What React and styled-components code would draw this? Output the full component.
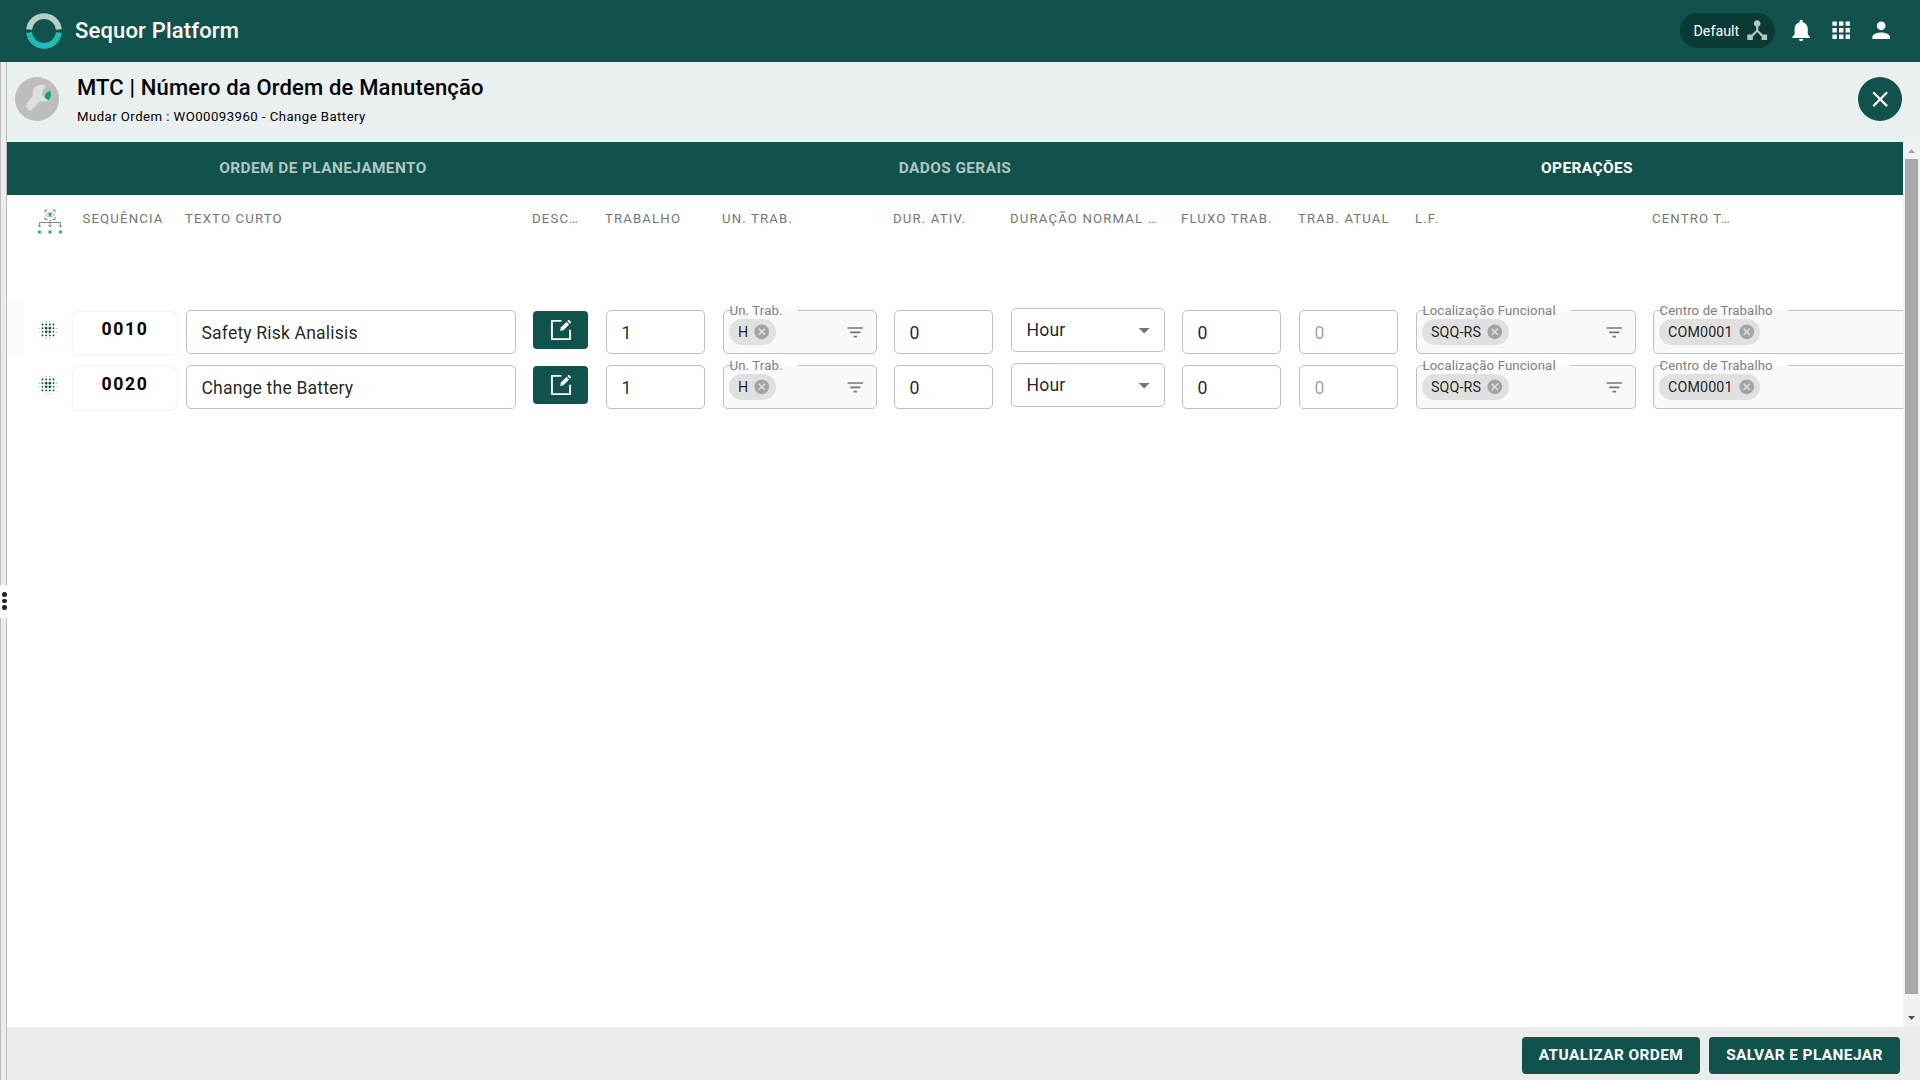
import React, { useState } from 'react';
import styled, { createGlobalStyle } from 'styled-components';
import {
  MdApps,
  MdArrowDropDown,
  MdBlurOn,
  MdCancel,
  MdClose,
  MdDeviceHub,
  MdFilterList,
  MdNotifications,
  MdPerson,
} from 'react-icons/md';

const GlobalStyle = createGlobalStyle`
  * {
    box-sizing: border-box;
  }

  body {
    margin: 0;
    font-family: Roboto, "Liberation Sans", sans-serif;
    color: rgba(0, 0, 0, 0.87);
    overflow: hidden;
  }

  svg {
    display: block;
    flex-shrink: 0;
  }

  button {
    border: 0;
    padding: 0;
    font-family: inherit;
    cursor: pointer;
  }
`;

const Page = styled.div`
  width: 1920px;
  height: 1080px;
  display: flex;
  flex-direction: column;
  background: #fff;
`;

const TopBar = styled.header`
  height: 62px;
  flex-shrink: 0;
  padding: 0 26px;
  display: flex;
  align-items: center;
  background: #11534c;
  border-bottom: 1px solid #1c4a48;
`;

const Brand = styled.h1`
  margin: 0 auto 0 13px;
  color: #fff;
  font-size: 22px;
  font-weight: 500;
  line-height: 26px;
  letter-spacing: 0.17px;
`;

const SitePill = styled.div`
  width: 95px;
  height: 35px;
  margin-right: 13px;
  padding: 0 5px 0 13px;
  display: flex;
  align-items: center;
  justify-content: space-between;
  border-radius: 18px;
  background: #0c3a35;
  color: #fff;
  font-size: 14.3px;

  svg {
    color: #b6c4c2;
  }
`;

const TopActions = styled.div`
  display: flex;
  gap: 13.2px;
  color: #fff;
`;

const Workspace = styled.div`
  flex: 1;
  min-height: 0;
  display: flex;
`;

const Splitter = styled.div`
  width: 7px;
  flex-shrink: 0;
  display: flex;
  flex-direction: column;
  justify-content: center;
  border: solid #bdbdbd;
  border-width: 0 1px;
  background: #ececec;
  padding-top: 60px;
`;

const SplitterHandle = styled.div`
  height: 33px;
  margin: 0 -1px;
  padding-left: 2px;
  display: flex;
  flex-direction: column;
  justify-content: center;
  gap: 2px;
  background: #fff;

  span {
    width: 4.6px;
    height: 4.6px;
    border-radius: 50%;
    background: #222;
  }
`;

const Main = styled.main`
  flex: 1;
  min-width: 0;
  display: flex;
  flex-direction: column;
`;

const PageHeader = styled.div`
  height: 80px;
  flex-shrink: 0;
  padding: 15px 18px 0 8px;
  display: flex;
  align-items: flex-start;
  background: #eaf0f0;
`;

const PageAvatar = styled.div`
  width: 44px;
  height: 44px;
  border-radius: 50%;
  background: #bdbdbd;
`;

const PageTitles = styled.div`
  margin: -2px auto 0 18px;
`;

const PageTitle = styled.h2`
  margin: 0;
  color: #000;
  font-size: 22px;
  font-weight: 500;
  line-height: 26px;
  letter-spacing: 0.17px;
`;

const PageSubtitle = styled.p`
  margin: 7px 0 0;
  color: #000;
  font-size: 13.2px;
  line-height: 18px;
  letter-spacing: 0.45px;
`;

const CloseButton = styled.button`
  width: 44px;
  height: 44px;
  display: flex;
  align-items: center;
  justify-content: center;
  border-radius: 50%;
  background: #11534c;
  color: #fff;
`;

const ScrollRegion = styled.div`
  flex: 1;
  min-height: 0;
  display: flex;
`;

const Content = styled.div`
  flex: 1;
  min-width: 0;
  overflow: hidden;
`;

const Tabs = styled.nav`
  height: 53px;
  display: grid;
  grid-template-columns: repeat(3, 1fr);
  background: #11534c;
`;

const Tab = styled.button`
  padding-bottom: 2px;
  background: none;
  color: ${props => (props.$active ? '#fff' : '#b0c5c2')};
  font-size: 15.4px;
  font-weight: 700;
  letter-spacing: 0.42px;
  text-transform: uppercase;
`;

const TableRow = styled.div`
  display: grid;
  grid-template-columns: 66px 112px 347px 73px 117px 171px 117px 171px 117px 117px 237px 300px;
  height: 55px;
`;

const TableHead = styled(TableRow)`
  height: 107px;
  padding-top: 14px;
`;

const HeadCell = styled.div`
  padding-left: ${props => props.$indent || 0}px;
  padding-top: 1px;
  color: #757575;
  font-size: 13.2px;
  line-height: 18px;
  letter-spacing: 1.14px;
  white-space: nowrap;
`;

const HeadIcon = styled.div`
  padding-left: 30px;
`;

const GrabCell = styled.div`
  display: flex;
  align-items: center;
  color: #11534c;
`;

const GrabEdge = styled.div`
  width: 17px;
  height: 55px;
  margin-right: 13px;
  background: ${props => (props.$shaded ? '#fafafa' : 'transparent')};
`;

const Cell = styled.div`
  padding: ${props => props.$top || 8}px ${props => (props.$wide ? 16 : 17)}px 0 1px;
`;

const SequenceBox = styled.div`
  width: 104px;
  height: 43px;
  margin-top: 9.5px;
  padding-top: 6px;
  border-radius: 6px;
  box-shadow: 0 0 2px rgba(0, 0, 0, 0.18);
  color: #000;
  font-size: 17.6px;
  font-weight: 700;
  line-height: 22px;
  letter-spacing: 1.6px;
  text-align: center;
`;

const Field = styled.div`
  height: 44px;
  padding: 1px 14.5px 0;
  display: flex;
  align-items: center;
  border: 1px solid #c0c0c0;
  border-radius: 5px;
  font-size: 17.6px;
  letter-spacing: 0.16px;
  color: ${props => (props.$disabled ? 'rgba(0, 0, 0, 0.38)' : 'rgba(0, 0, 0, 0.87)')};
`;

const SelectField = styled(Field)`
  padding: 0 7px 0 14.5px;
  justify-content: space-between;

  svg {
    color: #757575;
  }
`;

const LookupField = styled(Field)`
  position: relative;
  z-index: 0;
  padding: 0 10.5px 0 5px;
  justify-content: space-between;
  background: #f9f9f9;
  color: #757575;
`;

const LookupLabel = styled.span`
  position: absolute;
  top: -8px;
  left: 5.5px;
  padding-right: 15px;
  color: #808080;
  font-size: 13.2px;
  line-height: 16px;
  letter-spacing: 0.12px;
  white-space: nowrap;

  &::before {
    content: '';
    position: absolute;
    z-index: -1;
    top: 7px;
    left: 3px;
    right: 0;
    height: 1px;
    background: #f9f9f9;
  }
`;

const Chip = styled.span`
  height: 26px;
  padding: 0 5px 0 9px;
  display: flex;
  align-items: center;
  gap: 5px;
  border-radius: 13px;
  background: #e0e0e0;
  color: rgba(0, 0, 0, 0.87);
  font-size: 14.3px;
  letter-spacing: 0.12px;

  svg {
    color: #a3a3a3;
  }
`;

const EditButton = styled.button`
  width: 55px;
  height: 38px;
  display: flex;
  align-items: center;
  justify-content: center;
  border-radius: 4px;
  background: #11534c;
  color: #fff;
`;

const Scrollbar = styled.div`
  width: 17px;
  padding: 7px 2px;
  display: flex;
  flex-direction: column;
  align-items: center;
  background: #f1f1f1;
`;

const Thumb = styled.div`
  width: 13px;
  height: 835px;
  margin: 6px 0 22px;
  background: #a8a8a8;
`;

const Footer = styled.footer`
  height: 53px;
  flex-shrink: 0;
  padding: 10px 20px 0 0;
  display: flex;
  justify-content: flex-end;
  gap: 9px;
  background: #ebebeb;
`;

const ActionButton = styled.button`
  width: ${props => props.$width}px;
  height: 37px;
  padding-bottom: 2px;
  border-radius: 4px;
  background: #11534c;
  color: #fff;
  font-size: 15.4px;
  font-weight: 700;
  letter-spacing: 0.42px;
  text-transform: uppercase;
`;

const Logo = () => (
  <svg width="36" height="36" viewBox="0 0 36 36" fill="none" strokeWidth="5.8">
    <path d="M3.08 16.5A15 15 0 0 1 32.92 16.5" stroke="#b7cbc8" />
    <path d="M3.08 19.5A15 15 0 0 0 32.92 19.5" stroke="#20bbb7" />
  </svg>
);

const WrenchIcon = () => (
  <svg width="44" height="44" viewBox="0 0 44 44">
    <path
      d="M31 9.2c-2-1.6-5-1.8-8-.8-4 1.4-6 5-5.3 9.2.2 1 0 1.5-.8 2.2L11.2 27.5c-.8.9-.8 1.5 0 2.3l3 3.4c.8.8 1.4.8 2.2 0l8-8.4c.6-.6 1.2-.7 2.2-.5 3.2.8 6.4-.3 8-3-2.8.7-5.8-.5-6.9-3-1.1-2.8.2-6.9 3.3-9.1z"
      fill="#dedede"
    />
    <path d="M35 13.8c-3 1-5.2 3.2-5.2 5.4 0 1.8 1.6 3.2 4 3.7 2.2-2.4 2.9-6.2 1.2-9.1z" fill="#0aa37f" />
  </svg>
);

const HierarchyIcon = () => (
  <svg width="26" height="26" viewBox="0 0 26 26" fill="none" stroke="#7b7b7b">
    <path d="M8 3.5V1h2.5M15.5 1H18v2.5M8 8v2.5h2.5M15.5 10.5H18V8" />
    <path d="M8.5 5.8c2.5-2.8 6.5-2.8 9 0-2.5 2.7-6.5 2.7-9 0z" strokeWidth="0.7" />
    <circle cx="13" cy="5.6" r="1.5" fill="#0aa37f" stroke="none" />
    <path
      d="M2.5 18v-4.5h21V18M13 11v7M.8 16.3l1.7 1.7 1.7-1.7M11.3 16.3 13 18l1.7-1.7M21.8 16.3l1.7 1.7 1.7-1.7"
      strokeWidth="0.9"
    />
    <path d="M1 21.5h3v3H1zM11.5 21.5h3v3h-3zM22 21.5h3v3h-3z" fill="#0aa37f" stroke="#b5d8cf" strokeWidth="0.8" />
  </svg>
);

const EditIcon = () => (
  <svg width="22" height="22" viewBox="0 0 22 22" fill="none">
    <path d="M11.5 1.9H1.9v18.2h18.2v-9.3" stroke="#fff" strokeWidth="1.9" strokeLinejoin="round" />
    <path d="M10.2 11.9l.6-3.3 5.7-5.7 2.6 2.6-5.7 5.7z" fill="#fff" />
    <path d="M17.3 2.1l.8-.8c.4-.4.9-.4 1.3 0l1.3 1.3c.4.4.4.9 0 1.3l-.8.8z" fill="#fff" />
  </svg>
);

const ArrowIcon = ({ down }) => (
  <svg width="7" height="4" viewBox="0 0 7 4">
    <path d={down ? 'M0 0h7L3.5 4z' : 'M0 4h7L3.5 0z'} fill={down ? '#505050' : '#a3a3a3'} />
  </svg>
);

const tabs = ['Ordem de Planejamento', 'Dados Gerais', 'Operações'];

const columns = [
  { label: 'SEQUÊNCIA', indent: 9.5 },
  { label: 'TEXTO CURTO' },
  { label: 'DESC…' },
  { label: 'TRABALHO' },
  { label: 'UN. TRAB.' },
  { label: 'DUR. ATIV.' },
  { label: 'DURAÇÃO NORMAL …' },
  { label: 'FLUXO TRAB.' },
  { label: 'TRAB. ATUAL' },
  { label: 'L.F.' },
  { label: 'CENTRO T…' },
];

const operations = [
  { seq: '0010', text: 'Safety Risk Analisis', work: 1, unit: 'H', duration: 0, durationUnit: 'Hour', flow: 0, actual: 0, location: 'SQQ-RS', center: 'COM0001' },
  { seq: '0020', text: 'Change the Battery', work: 1, unit: 'H', duration: 0, durationUnit: 'Hour', flow: 0, actual: 0, location: 'SQQ-RS', center: 'COM0001' },
];

const Lookup = ({ label, value }) => (
  <LookupField>
    <LookupLabel>{label}</LookupLabel>
    <Chip>
      {value}
      <MdCancel size={17.6} />
    </Chip>
    <MdFilterList size={20.6} />
  </LookupField>
);

const OperationRow = ({ operation, first }) => (
  <TableRow>
    <GrabCell>
      <GrabEdge $shaded={first} />
      <MdBlurOn size={22} />
    </GrabCell>
    <SequenceBox>{operation.seq}</SequenceBox>
    <Cell $wide>
      <Field>{operation.text}</Field>
    </Cell>
    <Cell $top={9}>
      <EditButton>
        <EditIcon />
      </EditButton>
    </Cell>
    <Cell>
      <Field>{operation.work}</Field>
    </Cell>
    <Cell $wide>
      <Lookup label="Un. Trab." value={operation.unit} />
    </Cell>
    <Cell>
      <Field>{operation.duration}</Field>
    </Cell>
    <Cell $top={6} $wide>
      <SelectField>
        {operation.durationUnit}
        <MdArrowDropDown size={26.4} />
      </SelectField>
    </Cell>
    <Cell>
      <Field>{operation.flow}</Field>
    </Cell>
    <Cell>
      <Field $disabled>{operation.actual}</Field>
    </Cell>
    <Cell $wide>
      <Lookup label="Localização Funcional" value={operation.location} />
    </Cell>
    <Cell $wide>
      <Lookup label="Centro de Trabalho" value={operation.center} />
    </Cell>
  </TableRow>
);

const App = () => {
  const [activeTab, setActiveTab] = useState(2);

  return (
    <Page>
      <GlobalStyle />
      <TopBar>
        <Logo />
        <Brand>Sequor Platform</Brand>
        <SitePill>
          Default
          <MdDeviceHub size={26.4} />
        </SitePill>
        <TopActions>
          <MdNotifications size={26.4} />
          <MdApps size={26.4} />
          <MdPerson size={26.4} />
        </TopActions>
      </TopBar>

      <Workspace>
        <Splitter>
          <SplitterHandle>
            <span />
            <span />
            <span />
          </SplitterHandle>
        </Splitter>

        <Main>
          <PageHeader>
            <PageAvatar>
              <WrenchIcon />
            </PageAvatar>
            <PageTitles>
              <PageTitle>MTC | Número da Ordem de Manutenção</PageTitle>
              <PageSubtitle>Mudar Ordem : WO00093960 - Change Battery</PageSubtitle>
            </PageTitles>
            <CloseButton>
              <MdClose size={26.4} />
            </CloseButton>
          </PageHeader>

          <ScrollRegion>
            <Content>
              <Tabs>
                {tabs.map((tab, index) => (
                  <Tab key={tab} $active={index === activeTab} onClick={() => setActiveTab(index)}>
                    {tab}
                  </Tab>
                ))}
              </Tabs>

              <TableHead>
                <HeadIcon>
                  <HierarchyIcon />
                </HeadIcon>
                {columns.map(column => (
                  <HeadCell key={column.label} $indent={column.indent}>
                    {column.label}
                  </HeadCell>
                ))}
              </TableHead>

              {operations.map((operation, index) => (
                <OperationRow key={operation.seq} operation={operation} first={index === 0} />
              ))}
            </Content>

            <Scrollbar>
              <ArrowIcon />
              <Thumb />
              <ArrowIcon down />
            </Scrollbar>
          </ScrollRegion>

          <Footer>
            <ActionButton $width={178}>Atualizar Ordem</ActionButton>
            <ActionButton $width={191}>Salvar e Planejar</ActionButton>
          </Footer>
        </Main>
      </Workspace>
    </Page>
  );
};

export default App;
